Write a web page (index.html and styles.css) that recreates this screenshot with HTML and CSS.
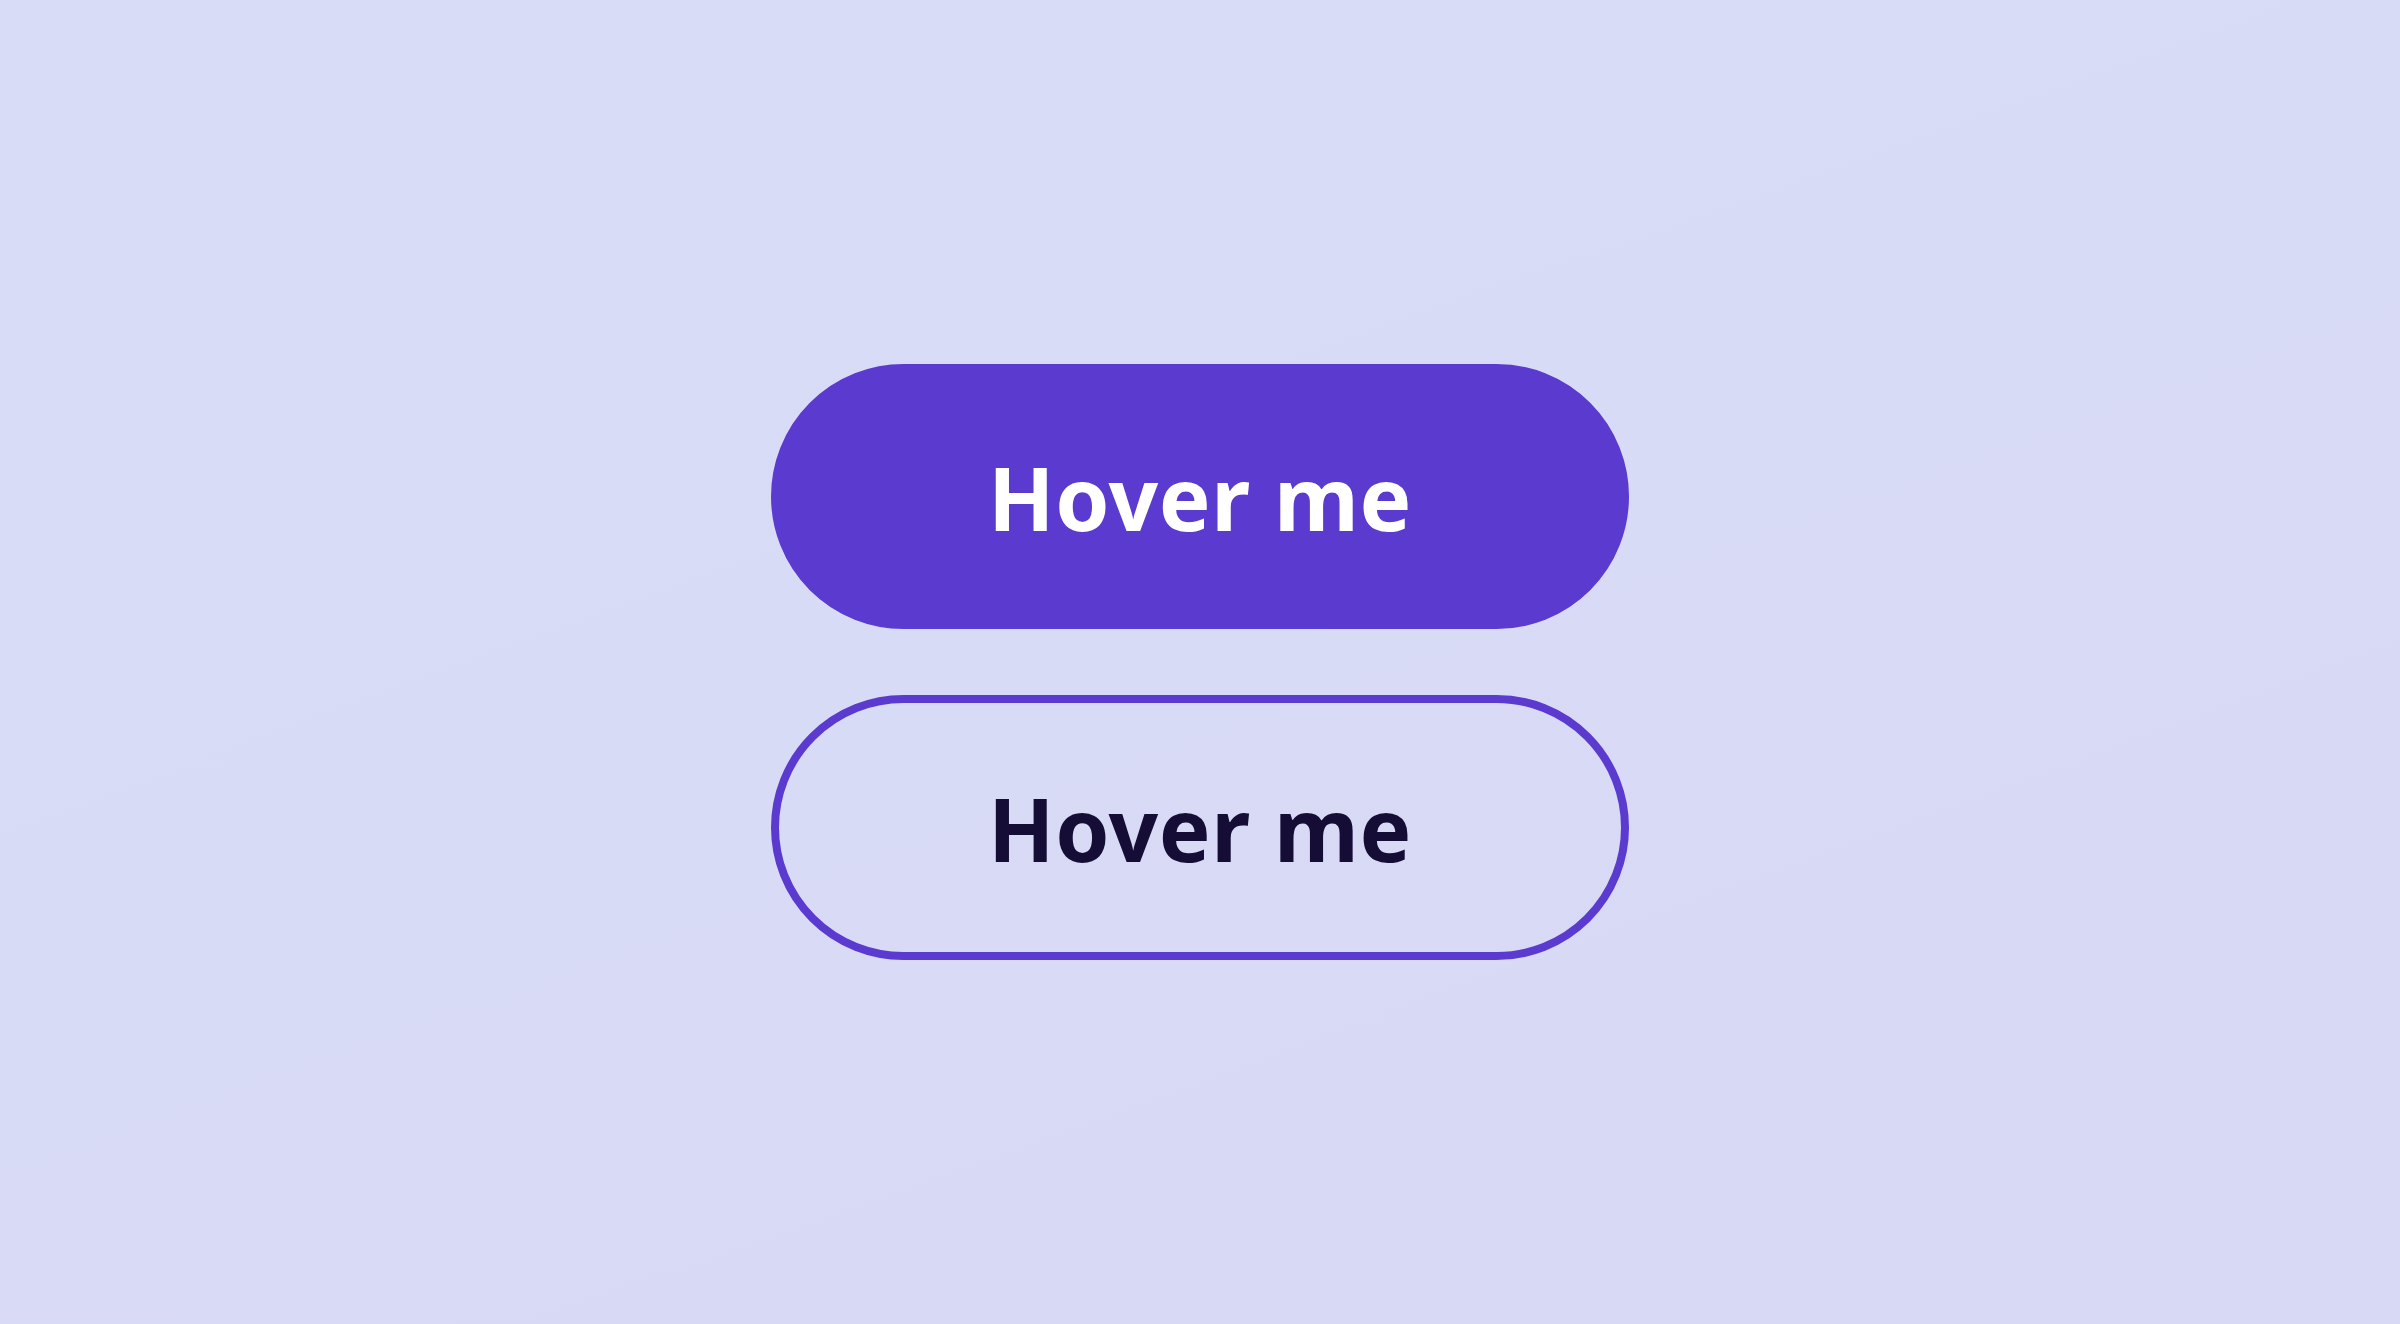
FILE: index.html
```html
<!DOCTYPE html>
<html lang="en">
<head>
<meta charset="utf-8">
<title>Hover me</title>
<link rel="stylesheet" href="styles.css">
</head>
<body>
<main class="stage">
  <button class="btn btn-solid" type="button">Hover me</button>
  <button class="btn btn-outline" type="button">Hover me</button>
</main>
</body>
</html>
```

FILE: styles.css
```css
html, body {
  margin: 0;
  padding: 0;
  height: 100%;
}
body {
  background: linear-gradient(160deg, #d9dcf6 0%, #d8dbf5 50%, #d8d9f5 100%);
  font-family: "Noto Sans", "Open Sans", sans-serif;
}
.stage {
  height: 100vh;
  display: flex;
  flex-direction: column;
  align-items: center;
  justify-content: center;
  gap: 66px;
}
.btn {
  box-sizing: border-box;
  width: 858px;
  height: 265px;
  border-radius: 9999px;
  border: 8px solid #5b3bcf;
  font-family: "Noto Sans", "Open Sans", sans-serif;
  font-weight: 700;
  font-size: 87px;
  letter-spacing: 0.6px;
  display: flex;
  align-items: center;
  justify-content: center;
  padding: 0;
  cursor: pointer;
}
.btn-solid {
  background: #5b3bcf;
  color: #ffffff;
}
.btn-outline {
  background: transparent;
  color: #150d36;
}
```
